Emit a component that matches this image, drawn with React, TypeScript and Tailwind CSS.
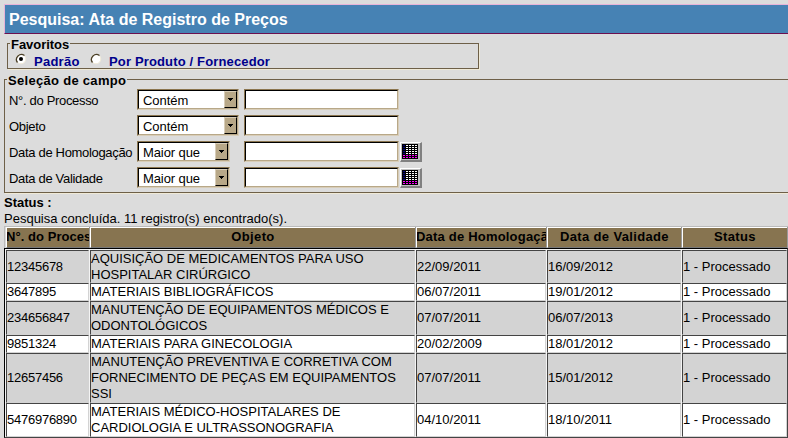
import React from "react";

type Row = { id: string; lines: string[]; h: string; homologacao: string; validade: string };

const rows: Row[] = [
  { id: "12345678", lines: ["AQUISIÇÃO DE MEDICAMENTOS PARA USO", "HOSPITALAR CIRÚRGICO"], h: "h-[33px]", homologacao: "22/09/2011", validade: "16/09/2012" },
  { id: "3647895", lines: ["MATERIAIS BIBLIOGRÁFICOS"], h: "h-[18px]", homologacao: "06/07/2011", validade: "19/01/2012" },
  { id: "234656847", lines: ["MANUTENÇÃO DE EQUIPAMENTOS MÉDICOS E", "ODONTOLÓGICOS"], h: "h-[34px]", homologacao: "07/07/2011", validade: "06/07/2013" },
  { id: "9851324", lines: ["MATERIAIS PARA GINECOLOGIA"], h: "h-[18px]", homologacao: "20/02/2009", validade: "18/01/2012" },
  { id: "12657456", lines: ["MANUTENÇÃO PREVENTIVA E CORRETIVA COM", "FORNECIMENTO DE PEÇAS EM EQUIPAMENTOS", "SSI"], h: "h-[50px]", homologacao: "07/07/2011", validade: "15/01/2012" },
  { id: "5476976890", lines: ["MATERIAIS MÉDICO-HOSPITALARES DE", "CARDIOLOGIA E ULTRASSONOGRAFIA"], h: "h-[34px]", homologacao: "04/10/2011", validade: "18/10/2011" },
];

const columns = "grid grid-cols-[83px_325px_130px_134px_105px] gap-x-px";

function Select({ label, wide }: { label: string; wide?: boolean }) {
  return (
    <div className={`${wide ? "w-[102px]" : "w-[93px]"} flex h-[21px] shrink-0 border border-t-[#8b7650] border-l-[#8b7650] border-r-[#d8cdb8] border-b-[#d8cdb8]`}>
      <div className="flex min-w-0 flex-1 border border-t-black border-l-black border-r-[#b8a888] border-b-[#b8a888] bg-white">
        <span className={`flex-1 pl-1 leading-[19px] whitespace-nowrap ${wide ? "tracking-[-0.05px]" : "tracking-[-0.1px]"}`}>{label}</span>
        <span className="flex w-[13px] items-center justify-center border border-t-[#d8cdb8] border-l-[#d8cdb8] border-r-black border-b-black bg-[#b8a888]">
          <svg width="5" height="3" shapeRendering="crispEdges"><path d="M0 0h5v1H4v1H3v1H2V2H1V1H0z" /></svg>
        </span>
      </div>
    </div>
  );
}

function CalendarButton() {
  return (
    <button className="mt-px ml-px block h-[20px] w-[22px] border-t border-l border-r-2 border-b-2 border-t-white border-l-white border-r-[#808080] border-b-[#808080] bg-[#c0c0c0]">
      <svg width="19" height="17" shapeRendering="crispEdges" className="block">
        <rect x="1" y="1" width="16" height="15" />
        {[2, 4, 6, 8, 10, 12, 14].map((y) =>
          [2, 5, 8, 11, 14].map((x) => (
            <rect key={`${x}-${y}`} x={x} y={y} width="2" height="1" fill={y > 11 ? "#f0f" : x === 2 ? "#000080" : "#fff"} />
          )),
        )}
      </svg>
    </button>
  );
}

function Field({ name, op, wide, calendar }: { name: string; op: string; wide?: boolean; calendar?: boolean }) {
  return (
    <div className="mb-[5px] flex h-[21px]">
      <span className="w-[128px] shrink-0 leading-[24px] tracking-[-0.32px] whitespace-nowrap">{name}</span>
      <div className="w-[107px] shrink-0"><Select label={op} wide={wide} /></div>
      <div className="h-[21px] w-[155px] shrink-0 border border-t-[#8b7650] border-l-[#8b7650] border-r-[#d8cdb8] border-b-[#d8cdb8]">
        <div className="h-full border border-t-black border-l-black border-r-[#b8a888] border-b-[#b8a888] bg-white" />
      </div>
      {calendar && <CalendarButton />}
    </div>
  );
}

function Radio({ checked }: { checked?: boolean }) {
  return (
    <svg width="12" height="12" className="shrink-0">
      <circle cx="6" cy="6" r="4.8" fill="#fff" stroke="#f0ead8" />
      <path d="M2.5 9.5A5 5 0 0 1 9.5 2.5" fill="none" stroke="#4a3f28" strokeWidth="1.3" />
      {checked && <circle cx="6" cy="6" r="2" />}
    </svg>
  );
}

function HeaderCell({ children, className = "" }: { children: React.ReactNode; className?: string }) {
  return (
    <div className={`overflow-hidden border-t border-l border-b border-t-white border-l-white border-b-[#777] bg-[#877450] leading-[18px] whitespace-nowrap ${className}`}>
      {children}
    </div>
  );
}

function Cell({ children, odd, className = "" }: { children: React.ReactNode; odd: boolean; className?: string }) {
  return (
    <div className={`flex flex-col justify-center overflow-hidden border border-t-[#444] border-l-[#444] border-r-[#d3d3d3] border-b-[#d3d3d3] leading-[16px] whitespace-nowrap ${odd ? "bg-white" : "bg-[#d3d3d3]"} ${className}`}>
      {children}
    </div>
  );
}

export default function App() {
  return (
    <div className="flex h-[438px] w-[788px] flex-col overflow-hidden bg-[#dcdcdc] pt-1 pl-1 font-['Liberation_Sans',Arial,sans-serif] text-[13px] text-black">
      <h1 className="h-[30px] shrink-0 border-t border-b border-l border-t-[#e8b4d8] border-b-[#6b1050] border-l-[#e8b4d8] bg-[#4682b4] pl-1 text-[16px] leading-[29px] font-bold text-white">
        Pesquisa: Ata de Registro de Preços
      </h1>

      <fieldset className="mt-[3px] ml-[3px] flex h-[32px] w-[472px] shrink-0 flex-col border border-[#6e6048] pl-[7px] shadow-[1px_1px_0_#f0ead8]">
        <legend className="-ml-[5px] h-[13px] px-px leading-[15px] font-bold tracking-[-0.05px]">Favoritos</legend>
        <div className="flex h-[18px] font-bold text-[#00008b]">
          <span className="mt-[3px]"><Radio checked /></span>
          <span className="ml-[7px] w-[56px] leading-[23px] tracking-[0.25px]">Padrão</span>
          <span className="mt-[3px]"><Radio /></span>
          <span className="ml-[7px] leading-[23px] tracking-[0.15px]">Por Produto / Fornecedor</span>
        </div>
      </fieldset>

      <fieldset className="mt-[4px] h-[120px] w-[800px] shrink-0 border border-[#6e6048] pl-1 shadow-[1px_1px_0_#f0ead8]">
        <legend className="-ml-[2px] h-[13px] px-px leading-[15px] font-bold tracking-[0.3px]">Seleção de campo</legend>
        <div className="pt-[3px]">
          <Field name="N°. do Processo" op="Contém" wide />
          <Field name="Objeto" op="Contém" wide />
          <Field name="Data de Homologação" op="Maior que" calendar />
          <Field name="Data de Validade" op="Maior que" calendar />
        </div>
      </fieldset>

      <div className="h-[33px] shrink-0 pt-[2px] leading-[16px]">
        <div className="font-bold">Status :</div>
        <div>Pesquisa concluída. 11 registro(s) encontrado(s).</div>
      </div>

      <div className="w-[784px] shrink-0 border-t border-l border-[#bbb] pl-px">
        <div className={`${columns} h-[21px] bg-[#999] text-center font-bold tracking-[0.35px]`}>
          <HeaderCell className="-indent-px text-left tracking-[0.05px]">N°. do Processo</HeaderCell>
          <HeaderCell>Objeto</HeaderCell>
          <HeaderCell className="-indent-px text-left tracking-[0.2px]">Data de Homologação</HeaderCell>
          <HeaderCell>Data de Validade</HeaderCell>
          <HeaderCell>Status</HeaderCell>
        </div>
      </div>
      <div className="h-[190px] w-[784px] shrink-0 border border-black border-r-[#444] border-b-[#444] bg-[#f4f4f4] pt-px pl-px">
        {rows.map((r, i) => (
          <div key={r.id} className={`${columns} ${r.h}`}>
            <Cell odd={i % 2 === 1} className="tracking-[-0.25px]">{r.id}</Cell>
            <Cell odd={i % 2 === 1}>{r.lines.map((l) => <div key={l}>{l}</div>)}</Cell>
            <Cell odd={i % 2 === 1}>{r.homologacao}</Cell>
            <Cell odd={i % 2 === 1}>{r.validade}</Cell>
            <Cell odd={i % 2 === 1}>1 - Processado</Cell>
          </div>
        ))}
      </div>
    </div>
  );
}
